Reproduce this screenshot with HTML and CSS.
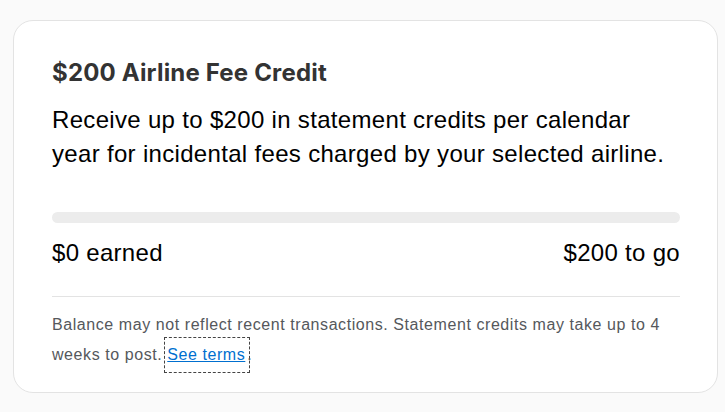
FILE: index.html
```html
<!DOCTYPE html>
<html lang="en">
<head>
<meta charset="utf-8">
<title>Airline Fee Credit</title>
<link rel="stylesheet" href="styles.css">
</head>
<body>
<main class="page">
  <section class="card">
    <h2 class="card-title">$200 Airline Fee Credit</h2>
    <p class="card-desc">Receive up to $200 in statement credits per calendar year for incidental fees charged by your selected airline.</p>
    <div class="progress"><div class="progress-fill" style="width:0%"></div></div>
    <div class="progress-labels">
      <span>$0 earned</span>
      <span>$200 to go</span>
    </div>
    <hr class="divider">
    <p class="note">Balance may not reflect recent transactions. Statement credits may take up to 4 weeks to post. <a class="terms" href="#">See terms</a>.</p>
  </section>
</main>
</body>
</html>
```

FILE: styles.css
```css
* { box-sizing: border-box; }

html, body {
  margin: 0;
  padding: 0;
  background: #fafafa;
}

body {
  font-family: "Liberation Sans", Arial, sans-serif;
  color: #000;
}

.page {
  padding: 20px 7px 0 13px;
}

.card {
  background: #fff;
  border: 1px solid #e3e3e3;
  border-radius: 20px;
  padding: 36px 37px 22px 38px;
}

.card-title {
  margin: 0;
  font-family: Inter, "Liberation Sans", sans-serif;
  font-size: 24px;
  line-height: 32px;
  font-weight: 700;
  letter-spacing: 0.18px;
  color: #333;
}

.card-desc {
  margin: 14px 0 0;
  max-width: 620px;
  font-size: 24px;
  line-height: 34px;
  letter-spacing: 0.32px;
  color: #000;
}

.progress {
  margin-top: 41px;
  height: 11px;
  border-radius: 6px;
  background: #ececec;
  overflow: hidden;
}

.progress-fill {
  height: 100%;
  background: #006fcf;
}

.progress-labels {
  margin-top: 13px;
  display: flex;
  justify-content: space-between;
  font-size: 24px;
  line-height: 34px;
  letter-spacing: 0.3px;
}

.divider {
  margin: 26px 0 0;
  border: 0;
  border-top: 1px solid #e3e3e3;
  height: 0;
}

.note {
  margin: 13px 0 0;
  font-size: 16px;
  line-height: 30px;
  letter-spacing: 0.57px;
  color: #55585c;
}

.terms {
  display: inline-block;
  padding-right: 2px;
  color: #006fcf;
  text-decoration: underline;
  outline: 1px dashed #444;
  outline-offset: 2px;
}
```
